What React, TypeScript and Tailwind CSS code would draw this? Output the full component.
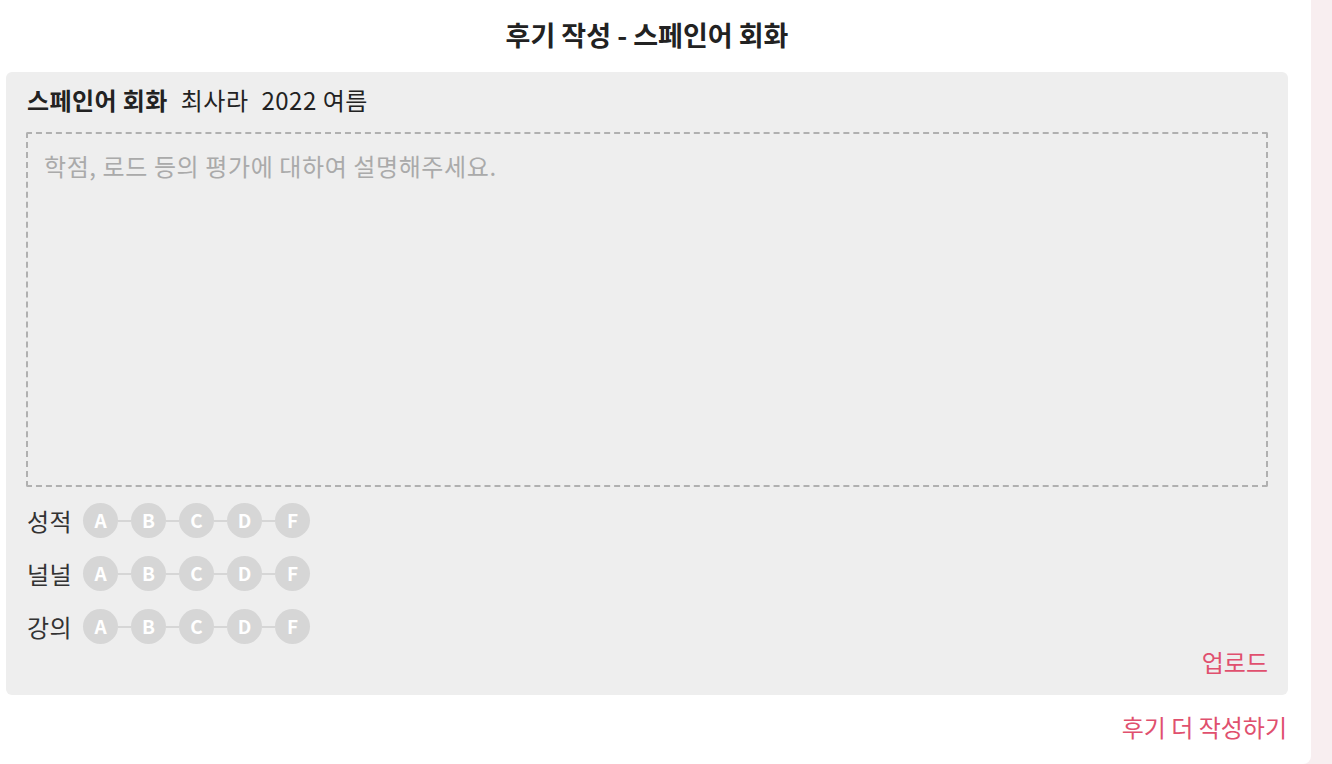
import React, { useState } from 'react';

const grades = ['A', 'B', 'C', 'D', 'F'];
const criteria = ['성적', '널널', '강의'];

const GradePicker: React.FC<{ label: string }> = ({ label }) => {
    const [picked, setPicked] = useState<string | null>(null);

    return (
        <div className="flex items-center h-[53px]">
            <span className="text-[24px] leading-[30px] text-[#333] w-[56px] tracking-[0.5px]">{label}</span>
            <div className="flex items-center">
                {grades.map((g, i) => (
                    <React.Fragment key={g}>
                        {i > 0 && <div className="w-[13px] h-[2px] bg-[#d6d6d6]" />}
                        <button
                            type="button"
                            onClick={() => setPicked(g)}
                            className={`w-[35px] h-[35px] rounded-full flex items-center justify-center text-[19px] font-bold text-white ${picked === g ? 'bg-[#e0506e]' : 'bg-[#d6d6d6]'}`}
                        >
                            {g}
                        </button>
                    </React.Fragment>
                ))}
            </div>
        </div>
    );
};

const App: React.FC = () => {
    const [text, setText] = useState('');

    return (
        <div
            className="flex w-[1332px] h-[764px] bg-[#f8eef0] overflow-hidden"
            style={{ fontFamily: '"Noto Sans CJK KR", "Noto Sans", sans-serif' }}
        >
            <div className="w-[1311px] h-[764px] bg-white rounded-br-lg pl-[6px] pr-[23px]">
                {/* Title */}
                <h1 className="h-[72px] flex items-center justify-center pb-[2px] text-[27px] leading-[34px] font-bold text-[#222]">
                    후기 작성 - 스페인어 회화
                </h1>

                {/* Review card */}
                <div className="bg-[#eeeeee] rounded-md h-[623px] px-[20px] pt-[11px]">
                    <div className="flex items-center gap-[13px] h-[34px] text-[24px] leading-[30px] text-[#222]">
                        <span className="font-bold ml-[1px] tracking-[0.4px]">스페인어 회화</span>
                        <span className="tracking-[0.5px]">최사라</span>
                        <span className="tracking-[0.5px]">2022 여름</span>
                    </div>

                    <textarea
                        value={text}
                        onChange={(e) => setText(e.target.value)}
                        placeholder="학점, 로드 등의 평가에 대하여 설명해주세요."
                        className="mt-[15px] block w-full h-[355px] resize-none bg-transparent border-2 border-dashed border-[#b0b0b0] rounded-[2px] px-[16px] pt-[15px] text-[24px] leading-[34px] tracking-[0.6px] text-[#333] placeholder:text-[#aaaaaa] outline-none"
                    />

                    <div className="mt-[7px] ml-[1px]">
                        {criteria.map((c) => (
                            <GradePicker key={c} label={c} />
                        ))}
                    </div>

                    <div className="flex justify-end -mt-[5px]">
                        <button type="button" className="text-[24px] leading-[28px] text-[#e0506e]">
                            업로드
                        </button>
                    </div>
                </div>

                <div className="flex justify-end h-[64px] items-center">
                    <button type="button" className="text-[24px] leading-[30px] text-[#e0506e] mr-[1px]">
                        후기 더 작성하기
                    </button>
                </div>
            </div>
        </div>
    );
};

export default App;
